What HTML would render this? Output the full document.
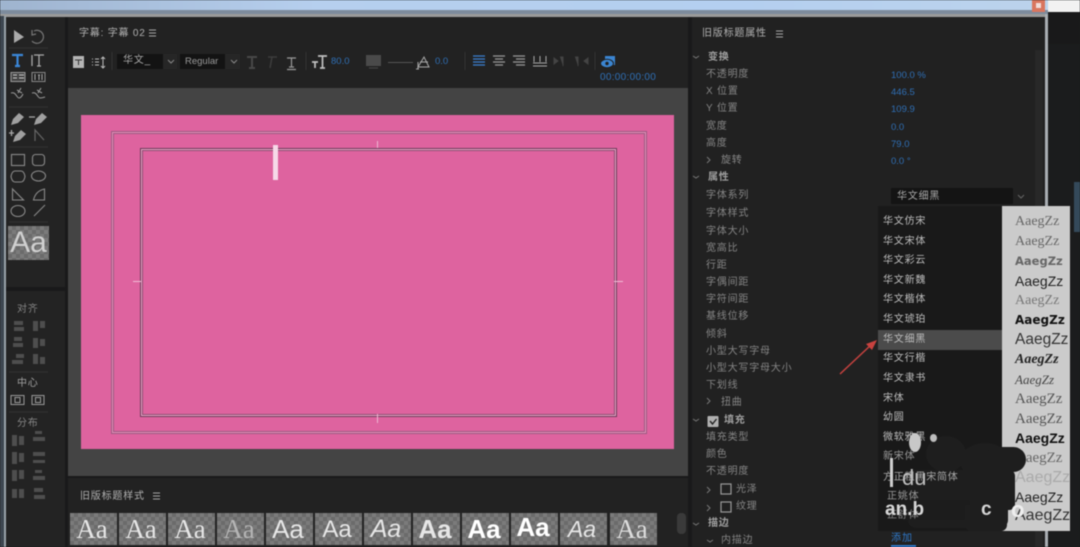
<!DOCTYPE html>
<html>
<head>
<meta charset="utf-8">
<style>
html,body{margin:0;padding:0;background:#1a1b1c}
#r{position:relative;width:1080px;height:547px;overflow:hidden;background:#19191a;font-family:"Liberation Sans","Noto Sans CJK SC",sans-serif;filter:blur(.45px)}
#r div{position:absolute}
.t{white-space:nowrap;color:#858585;font-size:10px;line-height:14px;letter-spacing:.8px;margin-top:1px}
.h{color:#a0a0a0;font-weight:bold}
.l{color:#b0b0b0;margin-top:2px}
.b{white-space:nowrap;color:#2f6fb5;font-size:9.500px;line-height:12px}
.f{white-space:nowrap;color:#bdbdbd;font-size:10px;line-height:14px;letter-spacing:.8px;left:883px;margin-top:1px}
.p{white-space:nowrap;color:#444;font-size:14px;line-height:18px;left:1015px;font-family:"Liberation Serif",serif}
.sw{top:513px;width:47px;height:32px;overflow:hidden;background-color:#7b7b7b;background-image:linear-gradient(45deg,#6b6b6b 25%,transparent 25%,transparent 75%,#6b6b6b 75%),linear-gradient(45deg,#6b6b6b 25%,transparent 25%,transparent 75%,#6b6b6b 75%);background-size:8px 8px;background-position:0 0,4px 4px;color:#e6e6e6;font-size:27px;line-height:33px;text-align:center;text-indent:-3px}
.k{background:#1e1e1e}
.wm{white-space:nowrap;color:#d6d6d6;font-weight:bold;letter-spacing:0}
svg{position:absolute;left:0;top:0}
</style>
</head>
<body>
<div id="r">
<!-- top blurred window bar -->
<div style="left:0;top:0;width:1048px;height:11px;background:linear-gradient(90deg,#9fb4cf,#b6cfee 30%,#b4cff0 70%,#bcd3ec)"></div>
<div style="left:0;top:10px;width:1048px;height:4px;background:#7d8b9c"></div>
<div style="left:0;top:14px;width:1048px;height:3px;background:#9a9a9a"></div>
<div style="left:1048px;top:0;width:32px;height:12px;background:#f2f2f2"></div>
<div style="left:1032px;top:0;width:13px;height:12px;background:#d9765f"></div>
<div style="left:1036px;top:3px;width:5px;height:5px;background:#f1dcd8"></div>
<div style="left:0;top:16px;width:4px;height:531px;background:#3d4650"></div>
<div style="left:4px;top:16px;width:2px;height:531px;background:#9aa3aa"></div>
<div style="left:1045px;top:14px;width:3px;height:533px;background:#a9aeb3"></div>
<div style="left:1048px;top:44px;width:32px;height:503px;background:#1b1c1d"></div>
<div style="left:1074px;top:182px;width:6px;height:50px;background:#34495a"></div>

<!-- tools panel -->
<div style="left:6px;top:17px;width:59px;height:270px;background:#232323"></div>
<div style="left:6px;top:291px;width:59px;height:256px;background:#232323"></div>

<!-- title panel -->
<div style="left:68px;top:17px;width:620px;height:71px;background:#222"></div>
<div style="left:68px;top:88px;width:620px;height:388px;background:#444"></div>
<div style="left:81px;top:115px;width:593px;height:334px;background:#de639f"></div>
<div style="left:111px;top:131px;width:534px;height:301px;border:1px solid #9a5a80;box-shadow:inset 0 0 0 1px #e58fb9,inset 0 0 0 2px #9a5a80"></div>
<div style="left:140px;top:148px;width:475px;height:267px;border:1px solid #6a3a58;box-shadow:inset 0 0 0 1px #eba5c8,inset 0 0 0 2px #8a4c70"></div>
<div style="left:273px;top:145px;width:5px;height:35px;background:#f6d9e8"></div>
<div style="left:377px;top:141px;width:1px;height:7px;background:#eeb5d1"></div>
<div style="left:377px;top:414px;width:1px;height:9px;background:#eeb5d1"></div>
<div style="left:133px;top:281px;width:8px;height:1px;background:#f0bcd6"></div>
<div style="left:614px;top:281px;width:9px;height:1px;background:#f0bcd6"></div>

<!-- bottom panel -->
<div style="left:68px;top:478px;width:620px;height:69px;background:#222"></div>
<div class="t l" style="left:80px;top:488px">旧版标题样式</div>
<div class="sw" style="left:70px;font-family:'Liberation Serif',serif;">Aa</div>
<div class="sw" style="left:119px;font-family:'Liberation Serif',serif;">Aa</div>
<div class="sw" style="left:168px;font-family:'Liberation Serif',serif;">Aa</div>
<div class="sw" style="left:217px;font-family:'Liberation Serif',serif;color:#b5b5b5">Aa</div>
<div class="sw" style="left:266px;font-size:26px">Aa</div>
<div class="sw" style="left:315px;font-size:24px">Aa</div>
<div class="sw" style="left:364px;font-style:italic;font-size:25px">Aa</div>
<div class="sw" style="left:413px;font-weight:bold;font-size:26px">Aa</div>
<div class="sw" style="left:462px;font-weight:bold;color:#fff;font-size:26px">Aa</div>
<div class="sw" style="left:511px;font-weight:bold;color:#fff;font-size:26px;line-height:29px">Aa</div>
<div class="sw" style="left:560px;font-style:italic;font-size:23px">Aa</div>
<div class="sw" style="left:610px;font-family:'Liberation Serif',serif;color:#ddd">Aa</div>
<div style="left:677px;top:513px;width:9px;height:21px;background:#3a3a3a;border-radius:4px"></div>

<!-- right panel -->
<div style="left:692px;top:17px;width:353px;height:530px;background:#212121"></div>
<div style="left:1035px;top:50px;width:8px;height:497px;background:#282828"></div>
<div class="t l" style="left:702px;top:25px">旧版标题属性</div>
<div class="t h" style="left:708px;top:50px">变换</div>
<div class="t" style="left:706px;top:67px">不透明度</div>
<div class="t" style="left:706px;top:84px">X 位置</div>
<div class="t" style="left:706px;top:101px">Y 位置</div>
<div class="t" style="left:706px;top:119px">宽度</div>
<div class="t" style="left:706px;top:136px">高度</div>
<div class="t" style="left:721px;top:153px">旋转</div>
<div class="t h" style="left:708px;top:170px">属性</div>
<div class="t" style="left:706px;top:188px">字体系列</div>
<div class="t" style="left:706px;top:206px">字体样式</div>
<div class="t" style="left:706px;top:224px">字体大小</div>
<div class="t" style="left:706px;top:241px">宽高比</div>
<div class="t" style="left:706px;top:258px">行距</div>
<div class="t" style="left:706px;top:275px">字偶间距</div>
<div class="t" style="left:706px;top:292px">字符间距</div>
<div class="t" style="left:706px;top:309px">基线位移</div>
<div class="t" style="left:706px;top:327px">倾斜</div>
<div class="t" style="left:706px;top:344px">小型大写字母</div>
<div class="t" style="left:706px;top:361px">小型大写字母大小</div>
<div class="t" style="left:706px;top:378px">下划线</div>
<div class="t" style="left:721px;top:395px">扭曲</div>
<div class="t h" style="left:724px;top:413px">填充</div>
<div class="t" style="left:706px;top:430px">填充类型</div>
<div class="t" style="left:706px;top:447px">颜色</div>
<div class="t" style="left:706px;top:464px">不透明度</div>
<div class="t" style="left:736px;top:482px">光泽</div>
<div class="t" style="left:736px;top:499px">纹理</div>
<div class="t h" style="left:708px;top:516px">描边</div>
<div class="t" style="left:721px;top:533px">内描边</div>
<div class="b" style="left:891px;top:70px">100.0 %</div>
<div class="b" style="left:891px;top:87px">446.5</div>
<div class="b" style="left:891px;top:104px">109.9</div>
<div class="b" style="left:891px;top:122px">0.0</div>
<div class="b" style="left:891px;top:139px">79.0</div>
<div class="b" style="left:891px;top:156px">0.0 °</div>
<div style="left:891px;top:188px;width:122px;height:16px;background:#141414"></div>
<div class="t" style="left:897px;top:189px;color:#a8a8a8">华文细黑</div>

<!-- dropdown -->
<div style="left:878px;top:206px;width:124px;height:325px;background:#191919"></div>
<div style="left:878px;top:330px;width:124px;height:20px;background:#4b4b4b"></div>
<div style="left:1002px;top:206px;width:68px;height:325px;background:#cbcbcb"></div>

<!-- watermark dark blobs below list text -->
<div class="k" style="left:926px;top:436px;width:40px;height:36px;border-radius:50%"></div>
<div class="k" style="left:908px;top:470px;width:100px;height:58px;border-radius:8px"></div>
<div class="k" style="left:896px;top:500px;width:100px;height:20px;border-radius:8px;background:#1c1c1c"></div>

<div class="f" style="top:214px">华文仿宋</div>
<div class="f" style="top:234px">华文宋体</div>
<div class="f" style="top:253px">华文彩云</div>
<div class="f" style="top:273px">华文新魏</div>
<div class="f" style="top:292px">华文楷体</div>
<div class="f" style="top:312px">华文琥珀</div>
<div class="f" style="top:332px">华文细黑</div>
<div class="f" style="top:351px">华文行楷</div>
<div class="f" style="top:371px">华文隶书</div>
<div class="f" style="top:391px">宋体</div>
<div class="f" style="top:410px">幼圆</div>
<div class="f" style="top:430px">微软雅黑</div>
<div class="f" style="top:449px;color:#999">新宋体</div>
<div class="f" style="top:470px;color:#a8a8a8">方正粗黑宋简体</div>
<div class="f" style="top:489px;color:#999;left:887px">正姚体</div>
<div class="f" style="top:508px;color:#888;left:887px">正舒体</div>

<div class="p" style="top:213px;color:#666">AaegZz</div>
<div class="p" style="top:233px;color:#666">AaegZz</div>
<div class="p" style="top:252px;color:#666;font-weight:bold;font-family:'DejaVu Sans',sans-serif;font-size:11.500px">AaegZz</div>
<div class="p" style="top:272px;color:#222;font-family:'Liberation Sans',sans-serif">AaegZz</div>
<div class="p" style="top:292px;color:#777">AaegZz</div>
<div class="p" style="top:311px;color:#111;font-weight:bold;font-family:'DejaVu Sans',sans-serif;font-size:12px">AaegZz</div>
<div class="p" style="top:331px;color:#333;font-family:'Liberation Sans',sans-serif;font-size:15.500px">AaegZz</div>
<div class="p" style="top:351px;color:#222;font-style:italic;font-weight:bold">AaegZz</div>
<div class="p" style="top:371px;color:#444;font-style:italic;font-size:13px">AaegZz</div>
<div class="p" style="top:390px;color:#555;font-size:15px">AaegZz</div>
<div class="p" style="top:410px;color:#555;font-size:15px">AaegZz</div>
<div class="p" style="top:429px;color:#111;font-weight:bold;font-family:'Liberation Sans',sans-serif">AaegZz</div>
<div class="p" style="top:449px;color:#666;font-size:15px">AaegZz</div>
<div class="p" style="top:469px;color:#aaa;font-family:'Liberation Sans',sans-serif;font-size:16px">AaegZz</div>
<div class="p" style="top:488px;color:#222;font-family:'Liberation Sans',sans-serif">AaegZz</div>
<div class="p" style="top:507px;color:#333;font-family:'Liberation Sans',sans-serif;font-size:16px;width:55px;overflow:hidden">AaegZz</div>
<div class="b" style="left:891px;top:532px;color:#2f78c8;font-size:10px;line-height:14px;letter-spacing:1px">添加</div>
<div style="left:891px;top:545px;width:25px;height:2px;background:#2f78c8"></div>

<!-- watermark covering previews -->
<div class="k" style="left:960px;top:443px;width:50px;height:36px;border-radius:50%"></div>
<div class="k" style="left:985px;top:447px;width:41px;height:25px;border-radius:13px"></div>
<div class="k" style="left:970px;top:470px;width:45px;height:40px;border-radius:6px"></div>
<div class="k" style="left:965px;top:505px;width:42px;height:26px;border-radius:0 0 6px 6px"></div>

<!-- baidu pieces -->
<div style="left:909px;top:433px;width:12px;height:19px;background:#c8c8c8;border-radius:50%"></div>
<div style="left:930px;top:434px;width:7px;height:8px;background:#bdbdbd;border-radius:50%"></div>
<div style="left:890px;top:458px;width:3px;height:29px;background:#cfcfcf"></div>
<div class="wm" style="left:902px;top:466px;font-size:22px;line-height:24px;color:#c0c0c0;font-weight:normal">du</div>
<div class="wm" style="left:885px;top:499px;font-size:19px;line-height:22px">an.b</div>
<div class="wm" style="left:981px;top:499px;font-size:19px;line-height:22px">c</div>
<div class="wm" style="left:1011px;top:499px;font-size:22px;line-height:22px;color:#eee">o</div>

<!-- toolbar text -->
<div class="t l" style="left:79px;top:25px">字幕: 字幕 02</div>
<div style="left:117px;top:54px;width:46px;height:15px;background:#131313"></div>
<div style="left:163px;top:54px;width:14px;height:15px;background:#262626"></div>
<div style="left:180px;top:54px;width:45px;height:15px;background:#131313"></div>
<div style="left:225px;top:54px;width:15px;height:15px;background:#262626"></div>
<div class="t" style="left:123px;top:53px;color:#a8a8a8">华文_</div>
<div class="t" style="left:185px;top:54px;font-size:9.500px;letter-spacing:0;color:#9a9a9a">Regular</div>
<div class="b" style="left:331px;top:56px">80.0</div>
<div class="b" style="left:435px;top:56px">0.0</div>
<div class="b" style="left:600px;top:72px;font-size:10px;letter-spacing:.3px">00:00:00:00</div>
<div class="t" style="left:368px;top:53px;font-size:8px;letter-spacing:0;font-weight:bold;color:#222;line-height:12px">VA</div>

<!-- left side text -->
<div class="t" style="left:17px;top:302px">对齐</div>
<div class="t" style="left:17px;top:376px;color:#a0a0a0">中心</div>
<div class="t" style="left:17px;top:416px">分布</div>

<!-- Aa swatch -->
<div class="sw" style="left:8px;top:226px;width:41px;height:34px;font-size:30px;line-height:34px;color:#d0d0d0;text-indent:0">Aa</div>

<svg width="1080" height="547" fill="none">
<!-- red arrow -->
<path d="M840 374 L872 344" stroke="#c8423f" stroke-width="1.500"/>
<path d="M877 340 L866 344 L872 350 Z" fill="#c8423f"/>
<!-- hamburgers -->
<g stroke="#a5a5a5" stroke-width="1">
<path d="M149 30h7M149 33h7M149 36h7"/>
<path d="M153 493h7M153 496h7M153 499h7"/>
<path d="M776 31h7M776 34h7M776 37h7"/>
</g>
<!-- tools -->
<path d="M14 30 L24 37 L14 43 Z" fill="#aaa"/>
<path d="M34 31 a6.500 6.500 0 1 1 -2 10M32 30 l0 5 l4 -1" stroke="#777" stroke-width="1.200"/>
<path d="M12 55h11M17.500 55v11M15 66h5" stroke="#3b87d8" stroke-width="2.200"/>
<path d="M34 55h10M39 55v11M37 66h4M32 55v11" stroke="#aaa" stroke-width="1.300"/>
<rect x="11" y="72.500" width="14" height="9" stroke="#999" fill="#444"/><path d="M13 75h4M13 78h4M19 75h5M19 78h5" stroke="#ccc"/>
<rect x="32" y="72.500" width="13" height="9" stroke="#888"/><path d="M35 74v6M42 74v6M38 75h2M39 75v5" stroke="#aaa"/>
<path d="M11 93q3 -1 5 2t3 3 q2 0 4 -4M17 90l5 3M18 93l3-5M32 93q3 -1 5 2t3 3q2 0 5 -1M37 90l5 3M38 93l3-5" stroke="#999" stroke-width="1.100"/>
<g fill="#a0a0a0">
<path d="M11 125l2 -6 6 -6 5 4 -6 6z"/>
<path d="M34 125l2 -6 6 -6 5 4 -6 6z"/>
<path d="M13 142l2 -6 6 -6 5 4 -6 6z"/>
</g>
<path d="M29 117h6M9 133h5M11.500 130v6" stroke="#aaa" stroke-width="1.300"/>
<path d="M35 141v-11l9 10" stroke="#666" stroke-width="1.200"/>
<g stroke="#8a8a8a" stroke-width="1.100">
<rect x="11.500" y="154.500" width="13" height="11"/>
<rect x="32.500" y="154.500" width="12" height="11" rx="3"/>
<path d="M15 171h6q3 0 4 5.500q-1 5.500-4 5.500h-6q-3 0-4-5.500q1-5.500 4-5.500z"/>
<ellipse cx="38.500" cy="176" rx="7" ry="5"/>
<path d="M12.500 189v11h11z"/>
<path d="M33.500 200h11v-11q-9 2-11 11z"/>
<ellipse cx="18" cy="211" rx="7" ry="5.500"/>
<path d="M34 216l11-11"/>
</g>
<!-- panel separators -->
<g stroke="#333">
<path d="M9 48h39M9 107h39M9 147h39M9 222h39M9 372h39M9 412h39"/>
</g>
<!-- align icons -->
<g fill="#4e4e4e">
<rect x="14" y="321" width="9" height="4"/><rect x="14" y="327" width="10" height="4"/>
<rect x="33" y="321" width="5" height="10"/><rect x="40" y="321" width="5" height="7"/>
<rect x="14" y="337" width="8" height="4"/><rect x="13" y="343" width="10" height="4"/>
<rect x="33" y="338" width="5" height="10"/><rect x="40" y="339" width="5" height="7"/>
<rect x="16" y="354" width="8" height="4"/><rect x="12" y="360" width="11" height="4"/>
<rect x="33" y="354" width="5" height="10"/><rect x="40" y="357" width="5" height="7"/>
<rect x="12" y="435" width="5" height="11"/><rect x="19" y="436" width="5" height="9"/>
<rect x="33" y="437" width="12" height="4"/><rect x="35" y="431" width="7" height="3"/>
<rect x="12" y="452" width="5" height="12"/><rect x="19" y="453" width="5" height="9"/>
<rect x="33" y="452" width="12" height="4"/><rect x="33" y="460" width="12" height="3"/>
<rect x="12" y="470" width="5" height="11"/><rect x="19" y="470" width="5" height="9"/>
<rect x="33" y="476" width="12" height="4"/><rect x="35" y="470" width="7" height="3"/>
<rect x="12" y="489" width="5" height="9"/><rect x="19" y="489" width="5" height="9"/>
<rect x="34" y="488" width="9" height="4"/><rect x="34" y="495" width="11" height="4"/>
</g>
<g stroke="#999">
<rect x="11" y="395.500" width="13" height="9"/><rect x="15" y="397.500" width="5" height="5"/>
<rect x="32" y="395.500" width="12" height="9"/><rect x="35.500" y="397.500" width="5" height="5"/>
</g>
<!-- title toolbar icons -->
<rect x="73" y="56" width="11" height="12" fill="#b5b5b5"/>
<path d="M75 60h7M78.500 60v5" stroke="#333"/>
<path d="M92 59h1M92 62h1M92 65h1M95 59h4M95 62h4M95 65h4M103 57v11M101 59l2-2 2 2M101 66l2 2 2-2" stroke="#bbb"/>
<path d="M168 60l3 3 3-3M231 60l3 3 3-3" stroke="#888"/>
<path d="M247 57h10M252 57v11M249 68h6" stroke="#474747" stroke-width="2"/>
<path d="M268 57h9M272 57l-2 11" stroke="#3d3d3d" stroke-width="1.500"/>
<path d="M287 58h9M291.500 58v9M289 67h5M287 69.500h9" stroke="#9a9a9a" stroke-width="1.200"/>
<path d="M318 56h9M322.500 56v12M320 68h5M312 62h6M315 62v6" stroke="#c0c0c0" stroke-width="1.700"/>
<rect x="366" y="55" width="15" height="11" fill="#4a4a4a"/><path d="M369 68h9" stroke="#4a4a4a"/>
<path d="M388 62.500h25" stroke="#555"/>
<path d="M418 67h11l-5-10zM418 62v7M416 69h3M420 62h8" stroke="#aaa"/>
<path d="M473 56h12M473 59h12M473 62h12M473 65h12" stroke="#3b80cf" stroke-width="1.300"/>
<path d="M493 56h12M495 59h8M493 62h12M495 65h8" stroke="#999" stroke-width="1.300"/>
<path d="M513 56h12M516 59h9M513 62h12M516 65h9" stroke="#999" stroke-width="1.300"/>
<path d="M534 56v6M540 56v6M546 56v6M533 63h14M533 66h14" stroke="#aaa"/>
<path d="M554 58l4 3-4 3zM560 57h3v9" stroke="#444" fill="#444"/>
<path d="M575 57h3v9M588 58l-4 3 4 3z" stroke="#444" fill="#444"/>
<path d="M465 52v18M112 52v18M306 52v18M595 52v18" stroke="#333"/>
<rect x="605" y="56" width="10" height="9" fill="#3b85d1"/>
<ellipse cx="607" cy="63.500" rx="6.500" ry="4.200" fill="#3b85d1" stroke="#1f1f1f"/>
<circle cx="607" cy="63.500" r="1.700" fill="#1f1f1f"/>
<!-- right chevrons -->
<g stroke="#777">
<path d="M693 56l3 2 3-2M693 176l3 2 3-2M693 419l3 2 3-2M693 523l3 2 3-2M707 540l3 2 3-2"/>
<path d="M707 157l3 3-3 3M707 398l3 3-3 3M707 487l3 3-3 3M707 505l3 3-3 3"/>
<path d="M1018 195l3 3 3-3" stroke="#666"/>
</g>
<rect x="707.500" y="416" width="11" height="11" rx="1" fill="#b0b0b0"/>
<path d="M710 421l2.500 3 4-5" stroke="#222" stroke-width="1.400"/>
<rect x="721" y="484" width="10" height="10" stroke="#999" stroke-width="1.200"/>
<rect x="721" y="502" width="10" height="10" stroke="#999" stroke-width="1.200"/>
</svg>
</div>
</body>
</html>
